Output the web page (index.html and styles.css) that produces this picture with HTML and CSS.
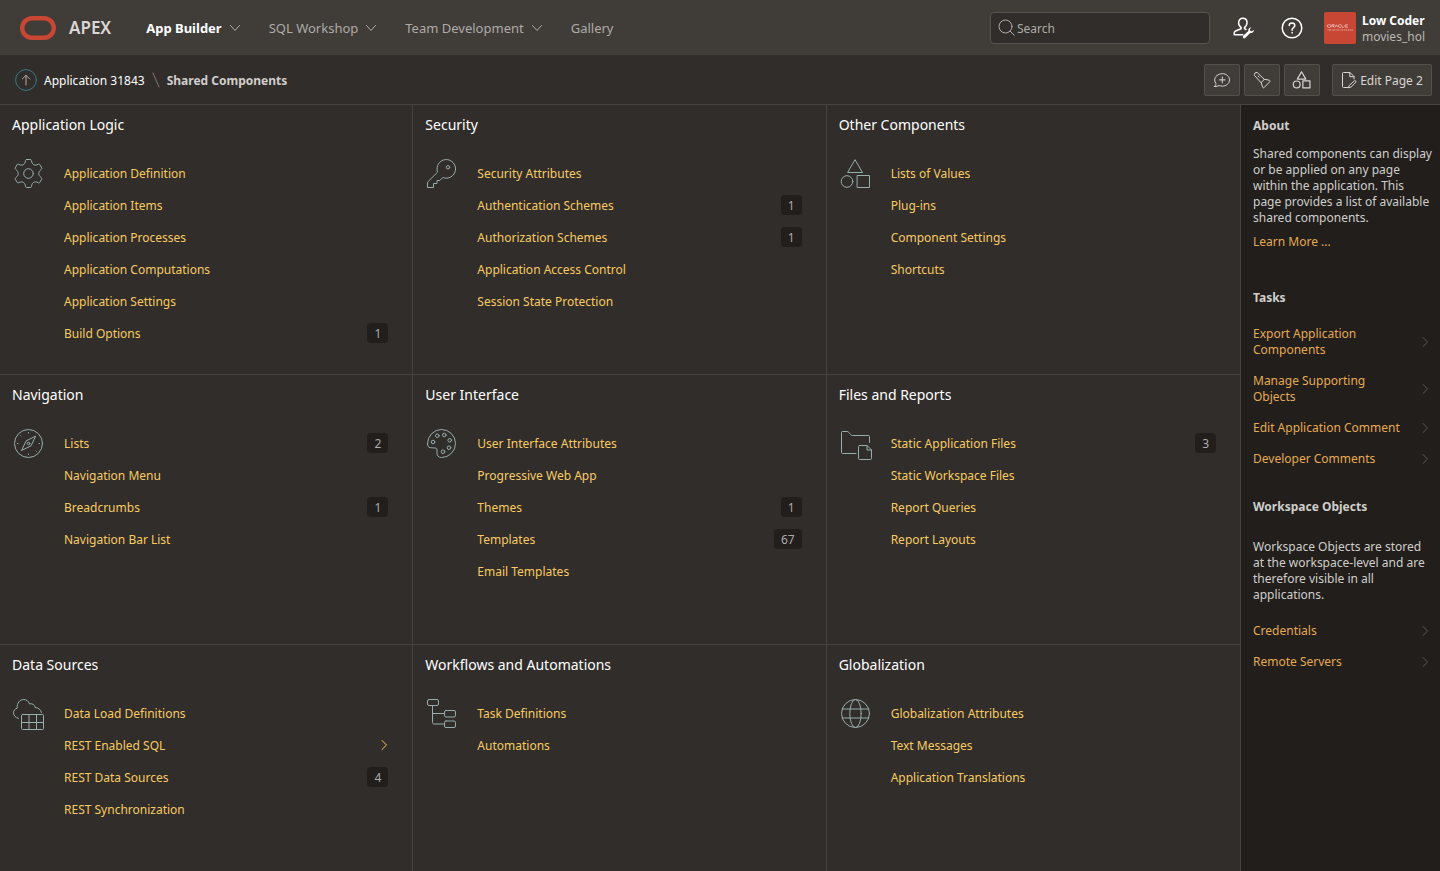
FILE: index.html
```html
<!DOCTYPE html>
<html lang="en">
<head>
<meta charset="utf-8">
<meta name="viewport" content="width=device-width, initial-scale=1">
<title>Shared Components</title>
<link rel="stylesheet" href="styles.css">
</head>
<body>
<svg class="defs" width="0" height="0" aria-hidden="true">
  <symbol id="down" viewBox="0 0 12 12"><path d="M1.5 3.5 6 8.5l4.500-5"/></symbol>
  <symbol id="right" viewBox="0 0 12 12"><path d="m4 1.500 4.500 4.500L4 10.500"/></symbol>
  <symbol id="shapes" viewBox="0 0 34 34"><path d="M16.200 3 23.500 15.500H9z"/><circle cx="8" cy="24.500" r="5.800"/><path d="M18.500 18.500h12v12h-12z"/></symbol>
</svg>
<header class="topbar">
  <a class="brand" href="#">
    <svg width="36" height="24" viewBox="0 0 36 24" aria-hidden="true"><rect x="2.200" y="2.200" width="31.600" height="19.600" rx="9.800" fill="none" stroke="#c74634" stroke-width="4.400"/></svg>
    <span>APEX</span>
  </a>
  <nav class="menu" aria-label="Main">
    <button class="menu-item current" type="button">App Builder <svg class="ico" width="12" height="12"><use href="#down"/></svg></button>
    <button class="menu-item" type="button">SQL Workshop <svg class="ico" width="12" height="12"><use href="#down"/></svg></button>
    <button class="menu-item" type="button">Team Development <svg class="ico" width="12" height="12"><use href="#down"/></svg></button>
    <a class="menu-item" href="#">Gallery</a>
  </nav>
  <label class="search">
    <svg class="ico" width="18" height="18" viewBox="0 0 18 18" aria-hidden="true"><circle cx="7.500" cy="7.500" r="6.500"/><path d="m12.200 12.200 4 4"/></svg>
    <input type="search" placeholder="Search" aria-label="Search">
  </label>
  <div class="tools">
    <button class="tool" type="button" aria-label="Administration">
      <svg class="ico bold" width="22" height="22" viewBox="0 0 22 22"><path d="M13 12.500 11.500 11.700v-1.200c1.600-1 2.500-2.900 2.500-5C14 3 12.200 1.200 9.800 1.200S5.600 3 5.600 5.500c0 2.100.9 4 2.500 5v1.200L2.600 14c-.9.400-1.400 1.200-1.400 2.200v1.600h8.600"/><path class="solid" d="m10.200 18.800 5.200-4.700c-.5-2 .8-3.800 2.900-3.600l-1.500 1.700.5 1.700 1.700.4 1.700-1.600c.3 2.200-1.400 3.700-3.500 3.300l-5 5.100c-1.400 1.100-3.200-1-2-2.300z"/></svg>
    </button>
    <button class="tool" type="button" aria-label="Help">
      <svg class="ico bold" width="22" height="22" viewBox="0 0 22 22"><circle cx="11" cy="11" r="9.800"/><path d="M8.200 8.600c0-1.700 1.200-2.700 2.800-2.700s2.800 1 2.800 2.600c0 2.100-2.700 2.300-2.700 4.200v.6M11.100 15.500v.6"/></svg>
    </button>
  </div>
  <button class="account" type="button">
    <span class="avatar"><svg width="32" height="32" viewBox="0 0 32 32" aria-hidden="true"><g fill="none" stroke="#fff"><path stroke-width=".6" opacity=".85" d="M4.500 12.700h1.300a1.300 1.300 0 0 1 0 2.600H4.500a1.300 1.300 0 0 1 0-2.600M8 15.300v-2.600h2.200v1.400H8.800l1.500 1.200M11 15.300l1.400-2.500 1.500 2.500M17 12.700h-1.300a1.300 1.300 0 0 0 0 2.600H17M17.800 12.700v2.600h2.400M23.700 12.700h-1.500a1.300 1.300 0 0 0 0 2.600h1.500M21.500 14h2"/><path opacity=".5" stroke-width="1.200" stroke-dasharray="1 .5 2 .6" d="M3.500 18H29"/></g></svg></span>
    <span class="who"><strong>Low Coder</strong><span>movies_hol</span></span>
  </button>
</header>

<div class="crumbbar">
  <nav class="crumbs" aria-label="Breadcrumb">
    <a class="up" href="#" aria-label="Up"><svg class="ico" width="22" height="22" viewBox="0 0 22 22"><circle cx="11" cy="11" r="10.400"/><path class="arrow" d="M11 16V6.500M7.300 10 11 6.300l3.700 3.700"/></svg></a>
    <a class="crumb" href="#">Application 31843</a>
    <svg class="ico slash" width="8" height="16" viewBox="0 0 8 16" aria-hidden="true"><path d="m1 1 6 14"/></svg>
    <strong class="crumb">Shared Components</strong>
  </nav>
  <div class="actions">
    <button class="btn" type="button" aria-label="Comments"><svg class="ico" width="18" height="18" viewBox="0 0 18 18"><path d="M1.500 15.500c.9-.7 1.400-1.600 1.500-2.800C2.200 11.600 1.700 10.400 1.700 9c0-3.600 3.400-6.300 7.600-6.300s7.200 2.700 7.200 6.200-3.100 6.200-7.200 6.200c-1.100 0-2.100-.2-3-.6-1.300.8-3 1.100-4.800 1zM9.300 6v5.800M6.400 8.900h5.800"/></svg></button>
    <button class="btn" type="button" aria-label="Search Application"><svg class="ico" width="18" height="18" viewBox="0 0 18 18"><path d="M8 11.700 1.500 4.500C.7 2.700 2.500.9 4.300 1.600l7 6.700 5 .9c.7.200 1 1 .5 1.500l-5.700 5.900c-.5.500-1.200.3-1.400-.3zM8 11.700l3.300-3.400M5 5l1.200 1.200"/></svg></button>
    <button class="btn" type="button" aria-label="Shared Components"><svg class="ico heavy" width="20" height="20"><use href="#shapes"/></svg></button>
    <button class="btn edit" type="button"><svg class="ico" width="16" height="18" viewBox="0 0 16 18" aria-hidden="true"><path d="M7 16.500H2.500c-.6 0-1-.4-1-1v-13c0-.6.400-1 1-1H9L13 5.500V8M8.800 1.500v4.200H13M8.500 14.200l4.900-4.400c1-.5 2 .4 1.500 1.400l-4.600 4.700-2.500.8z"/></svg><span class="crumb">Edit Page 2</span></button>
  </div>
</div>

<div class="page">
  <main class="grid">
    <section class="card"><h2>Application Logic</h2><div class="body">
      <svg class="ico pict" viewBox="0 0 34 34" aria-hidden="true"><path d="M14.700 2.500h3.600c.8 0 1 .4 1.200 1.200.5 2.300.9 3.300 2.300 4 1.500.8 2.400.5 4.200-.3.900-.4 1.500-.4 1.900.3l1.800 3.100c.4.700.1 1.100-.6 1.700-1.600 1.400-2.300 2.300-2.300 4s.7 2.600 2.300 4c.7.600 1 1 .6 1.700l-1.800 3.100c-.4.700-1 .7-1.900.3-1.800-.8-2.700-1.100-4.200-.3-1.400.7-1.800 1.700-2.300 4-.2.800-.4 1.200-1.200 1.200h-3.600c-.8 0-1-.4-1.200-1.200-.5-2.300-.9-3.300-2.300-4-1.500-.8-2.400-.5-4.200.3-.9.400-1.500.4-1.900-.3l-1.800-3.100c-.4-.7-.1-1.100.6-1.700 1.600-1.400 2.300-2.300 2.300-4s-.7-2.600-2.300-4c-.7-.6-1-1-.6-1.700l1.800-3.100c.4-.7 1-.7 1.900-.3 1.800.8 2.700 1.100 4.200.3 1.400-.7 1.800-1.700 2.300-4 .2-.8.400-1.200 1.200-1.200z"/><circle cx="16.500" cy="16.500" r="4.800"/></svg>
      <ul>
        <li><a href="#">Application Definition</a></li>
        <li><a href="#">Application Items</a></li>
        <li><a href="#">Application Processes</a></li>
        <li><a href="#">Application Computations</a></li>
        <li><a href="#">Application Settings</a></li>
        <li><a href="#">Build Options</a><span class="badge">1</span></li>
      </ul></div></section>
    <section class="card"><h2>Security</h2><div class="body">
      <svg class="ico pict" viewBox="0 0 34 34" aria-hidden="true"><path d="M12.400 14.800A9.300 9.300 0 1 1 17.800 20.500L14.800 23.500H12V26.500H8.500V30.500H2.500V25.500z"/><circle cx="23" cy="10.300" r="1.700"/></svg>
      <ul>
        <li><a href="#">Security Attributes</a></li>
        <li><a href="#">Authentication Schemes</a><span class="badge">1</span></li>
        <li><a href="#">Authorization Schemes</a><span class="badge">1</span></li>
        <li><a href="#">Application Access Control</a></li>
        <li><a href="#">Session State Protection</a></li>
      </ul></div></section>
    <section class="card"><h2>Other Components</h2><div class="body">
      <svg class="ico pict" viewBox="0 0 34 34" aria-hidden="true"><use href="#shapes"/></svg>
      <ul>
        <li><a href="#">Lists of Values</a></li>
        <li><a href="#">Plug-ins</a></li>
        <li><a href="#">Component Settings</a></li>
        <li><a href="#">Shortcuts</a></li>
      </ul></div></section>
    <section class="card"><h2>Navigation</h2><div class="body">
      <svg class="ico pict" viewBox="0 0 34 34" aria-hidden="true"><circle cx="16.500" cy="16.500" r="14"/><path d="M23.500 9.500 19 18.800 9.500 23.500 14 14.200z"/><circle cx="16.500" cy="16.500" r="1.300"/><path d="M16.500 5.500v.5M16.500 27v.5M5.500 16.500h.5M27 16.500h.5M8.700 8.700l.3.300M24 24l.3.300"/></svg>
      <ul>
        <li><a href="#">Lists</a><span class="badge">2</span></li>
        <li><a href="#">Navigation Menu</a></li>
        <li><a href="#">Breadcrumbs</a><span class="badge">1</span></li>
        <li><a href="#">Navigation Bar List</a></li>
      </ul></div></section>
    <section class="card"><h2>User Interface</h2><div class="body">
      <svg class="ico pict" viewBox="0 0 34 34" aria-hidden="true"><path d="M2.500 16.500a14 14 0 1 1 14 14c-2.700 0-4.500-1.600-4.500-4v-3.500c0-1.300-.6-2-2-2-1.800 0-2.700-.3-4.500-.3-2.200 0-3-1.700-3-4.200z"/><circle cx="12.300" cy="8.700" r="1.800"/><circle cx="19.300" cy="8" r="1.800"/><circle cx="24.700" cy="13.300" r="1.800"/><circle cx="24" cy="20.700" r="1.800"/><circle cx="18" cy="24.700" r="1.800"/><circle cx="8" cy="15" r="1.800"/></svg>
      <ul>
        <li><a href="#">User Interface Attributes</a></li>
        <li><a href="#">Progressive Web App</a></li>
        <li><a href="#">Themes</a><span class="badge">1</span></li>
        <li><a href="#">Templates</a><span class="badge">67</span></li>
        <li><a href="#">Email Templates</a></li>
      </ul></div></section>
    <section class="card"><h2>Files and Reports</h2><div class="body">
      <svg class="ico pict" viewBox="0 0 34 34" aria-hidden="true"><path d="M17 26.500H3.500c-.6 0-1-.4-1-1v-20c0-.6.400-1 1-1h4.700c.8 0 1.100.3 1.600.9l2 2.200c.5.600.8.900 1.600.9h16.100c.6 0 1 .4 1 1V15.500M20.500 18.500h7.500l4.500 4.500v8.500c0 .6-.4 1-1 1h-11c-.6 0-1-.4-1-1v-12c0-.6.400-1 1-1zM28 18.500V23h4.500"/></svg>
      <ul>
        <li><a href="#">Static Application Files</a><span class="badge">3</span></li>
        <li><a href="#">Static Workspace Files</a></li>
        <li><a href="#">Report Queries</a></li>
        <li><a href="#">Report Layouts</a></li>
      </ul></div></section>
    <section class="card"><h2>Data Sources</h2><div class="body">
      <svg class="ico pict" viewBox="0 0 34 34" aria-hidden="true"><path d="M6.500 21.400C3.500 20.800 1.500 18.500 1.500 15.800c0-2.300 1.300-3.800 3.700-4.600C4.800 6 7.700 2.500 11.700 2.500c2.700 0 4.800 1.600 5.800 4.400 2.800-.7 5.300.9 5.800 3.700 3 .1 5.300 1.800 6.200 4.900"/><rect x="9.500" y="17.500" width="22" height="15" rx="1"/><path d="M9.500 25.500h22M17 17.500v15M24.500 17.500v15"/></svg>
      <ul>
        <li><a href="#">Data Load Definitions</a></li>
        <li><a href="#">REST Enabled SQL</a><svg class="ico go" width="12" height="12" aria-hidden="true"><use href="#right"/></svg></li>
        <li><a href="#">REST Data Sources</a><span class="badge">4</span></li>
        <li><a href="#">REST Synchronization</a></li>
      </ul></div></section>
    <section class="card"><h2>Workflows and Automations</h2><div class="body">
      <svg class="ico pict" viewBox="0 0 34 34" aria-hidden="true"><rect x="2.500" y="2.500" width="11" height="6" rx="1.500"/><rect x="19.500" y="13.500" width="11" height="6.500" rx="1.500"/><rect x="19.500" y="24" width="11" height="6.500" rx="1.500"/><path d="M7.500 8.500v17c0 .8.500 1.500 1.500 1.500h10.500M7.500 16.500h12"/></svg>
      <ul>
        <li><a href="#">Task Definitions</a></li>
        <li><a href="#">Automations</a></li>
      </ul></div></section>
    <section class="card"><h2>Globalization</h2><div class="body">
      <svg class="ico pict" viewBox="0 0 34 34" aria-hidden="true"><circle cx="16.500" cy="16.500" r="14"/><ellipse cx="16.500" cy="16.500" rx="5.700" ry="14"/><path d="M3.200 12h26.600M3.200 21h26.600"/></svg>
      <ul>
        <li><a href="#">Globalization Attributes</a></li>
        <li><a href="#">Text Messages</a></li>
        <li><a href="#">Application Translations</a></li>
      </ul></div></section>
  </main>

  <aside class="side">
    <section class="about">
      <h3>About</h3>
      <p>Shared components can display or be applied on any page within the application. This page provides a list of available shared components.</p>
      <a href="#">Learn More ...</a>
    </section>
    <section class="block">
      <h3>Tasks</h3>
      <ul>
        <li><a href="#"><span>Export Application Components</span><svg class="ico" width="12" height="12" aria-hidden="true"><use href="#right"/></svg></a></li>
        <li><a href="#"><span>Manage Supporting Objects</span><svg class="ico" width="12" height="12" aria-hidden="true"><use href="#right"/></svg></a></li>
        <li><a href="#"><span>Edit Application Comment</span><svg class="ico" width="12" height="12" aria-hidden="true"><use href="#right"/></svg></a></li>
        <li><a href="#"><span>Developer Comments</span><svg class="ico" width="12" height="12" aria-hidden="true"><use href="#right"/></svg></a></li>
      </ul>
    </section>
    <section class="block">
      <h3>Workspace Objects</h3>
      <p>Workspace Objects are stored at the workspace-level and are therefore visible in all applications.</p>
      <ul>
        <li><a href="#"><span>Credentials</span><svg class="ico" width="12" height="12" aria-hidden="true"><use href="#right"/></svg></a></li>
        <li><a href="#"><span>Remote Servers</span><svg class="ico" width="12" height="12" aria-hidden="true"><use href="#right"/></svg></a></li>
      </ul>
    </section>
  </aside>
</div>
</body>
</html>
```
FILE: styles.css
```css
* { box-sizing: border-box; }

body {
  margin: 0;
  min-height: 100vh;
  display: flex;
  flex-direction: column;
  background: #312d2a;
  color: #fff;
  font: 400 12px/16px "Noto Sans", "Open Sans", sans-serif;
}

h2, h3, p, ul { margin: 0; padding: 0; }
ul { list-style: none; }
a { color: inherit; text-decoration: none; }
button { font: inherit; color: inherit; background: none; border: 0; padding: 0; cursor: pointer; }
svg { flex: none; }
.defs { position: absolute; }
.ico { fill: none; stroke: currentColor; stroke-linecap: round; stroke-linejoin: round; }

.topbar {
  display: flex;
  align-items: center;
  min-height: 55px;
  padding: 0 15px 0 20px;
  background: #403c38;
}
.brand { display: flex; align-items: center; gap: 13px; color: #d9d7d5; font-size: 17px; font-weight: 600; }
.menu { display: flex; align-items: center; gap: 28px; margin-left: 35px; }
.menu-item { display: flex; align-items: center; gap: 7px; color: #aeaba8; font-size: 13px; }
.menu-item.current { color: #fff; font-weight: 700; }
.menu-item .ico { color: #aeaba8; }

.search {
  display: flex;
  align-items: center;
  width: 220px;
  height: 32px;
  margin-left: auto;
  padding: 0 7px;
  border: 1px solid #57524d;
  border-radius: 4px;
  background: #312d2a;
  color: #aeaba8;
}
.search input { flex: 1; min-width: 0; padding: 2px 1px 0; border: 0; outline: 0; background: none; color: #fff; font: inherit; }
.search input::placeholder { color: #aeaba8; opacity: 1; }
.tools { display: flex; gap: 26px; margin: 0 21px 0 23px; }
.tool { display: flex; }
.bold { stroke-width: 1.5; }
.solid { fill: currentColor; stroke: none; }
.account { display: flex; align-items: center; gap: 6px; text-align: left; }
.avatar { display: flex; border-radius: 2px; background: #c74634; }
.who { display: flex; flex-direction: column; padding-top: 2px; }
.who strong { font-weight: 700; }
.who span { color: #bab7b4; }

.crumbbar {
  display: flex;
  align-items: center;
  justify-content: space-between;
  min-height: 50px;
  padding: 0 8px 0 15px;
  border-bottom: 1px solid #47433f;
}
.crumbs { display: flex; align-items: center; gap: 7px; }
.crumbs strong { color: #d0cecb; font-weight: 700; }
.crumb { padding-top: 2px; }
.up { display: flex; color: #3d7787; }
.up .arrow { color: #aeaba8; stroke: #aeaba8; }
.slash { color: #7b7773; }
.actions { display: flex; gap: 4px; }
.btn {
  display: flex;
  align-items: center;
  justify-content: center;
  width: 36px;
  height: 32px;
  border: 1px solid #54504b;
  border-radius: 2px;
  background: #403c38;
  color: #d9d7d5;
}
.btn.edit { width: 100px; gap: 3px; margin-left: 8px; }
.heavy { stroke-width: 2; }

.page { flex: 1; display: grid; grid-template-columns: 1fr 200px; }
.grid {
  display: grid;
  grid-template-columns: repeat(3, 1fr);
  grid-template-rows: minmax(270px, auto) minmax(270px, auto) 1fr;
}
.card { padding: 10px 24px 10px 12px; border-right: 1px solid #47433f; border-bottom: 1px solid #47433f; }
.card:nth-child(3n) { border-right: 0; }
.card:nth-child(n + 7) { border-bottom: 0; }
.card h2 { font-size: 14px; line-height: 20px; font-weight: 400; }
.body { display: flex; gap: 18px; margin-top: 22px; }
.pict { width: 34px; height: 34px; color: #97aeae; }
.body ul { flex: 1; }
.body li { display: flex; align-items: center; justify-content: space-between; height: 32px; color: #f7cb62; }
.body li a { padding-top: 2px; }
.badge { padding: 3px 7px 1px; border-radius: 4px; background: #211e1c; color: #aeaba8; }
.go { width: 12px; margin-right: -2px; }

.side { padding: 13px 8px 12px 12px; border-left: 1px solid #47433f; background: #211e1c; color: #d0cecb; }
.side h3 { font-size: 12px; line-height: 16px; font-weight: 700; }
.side a { color: #e5aa52; }
.about { display: flex; flex-direction: column; margin-bottom: 40px; }
.about p { margin: 12px 0 8px; }
.block { margin-bottom: 25px; }
.block p { margin: 24px 0 12px; }
.block h3 + ul { margin-top: 12px; }
.block li a { display: flex; align-items: center; justify-content: space-between; padding: 8px 1px 7px 0; }
.block li span { max-width: 150px; }
.block li .ico { color: #5d5853; }
```
